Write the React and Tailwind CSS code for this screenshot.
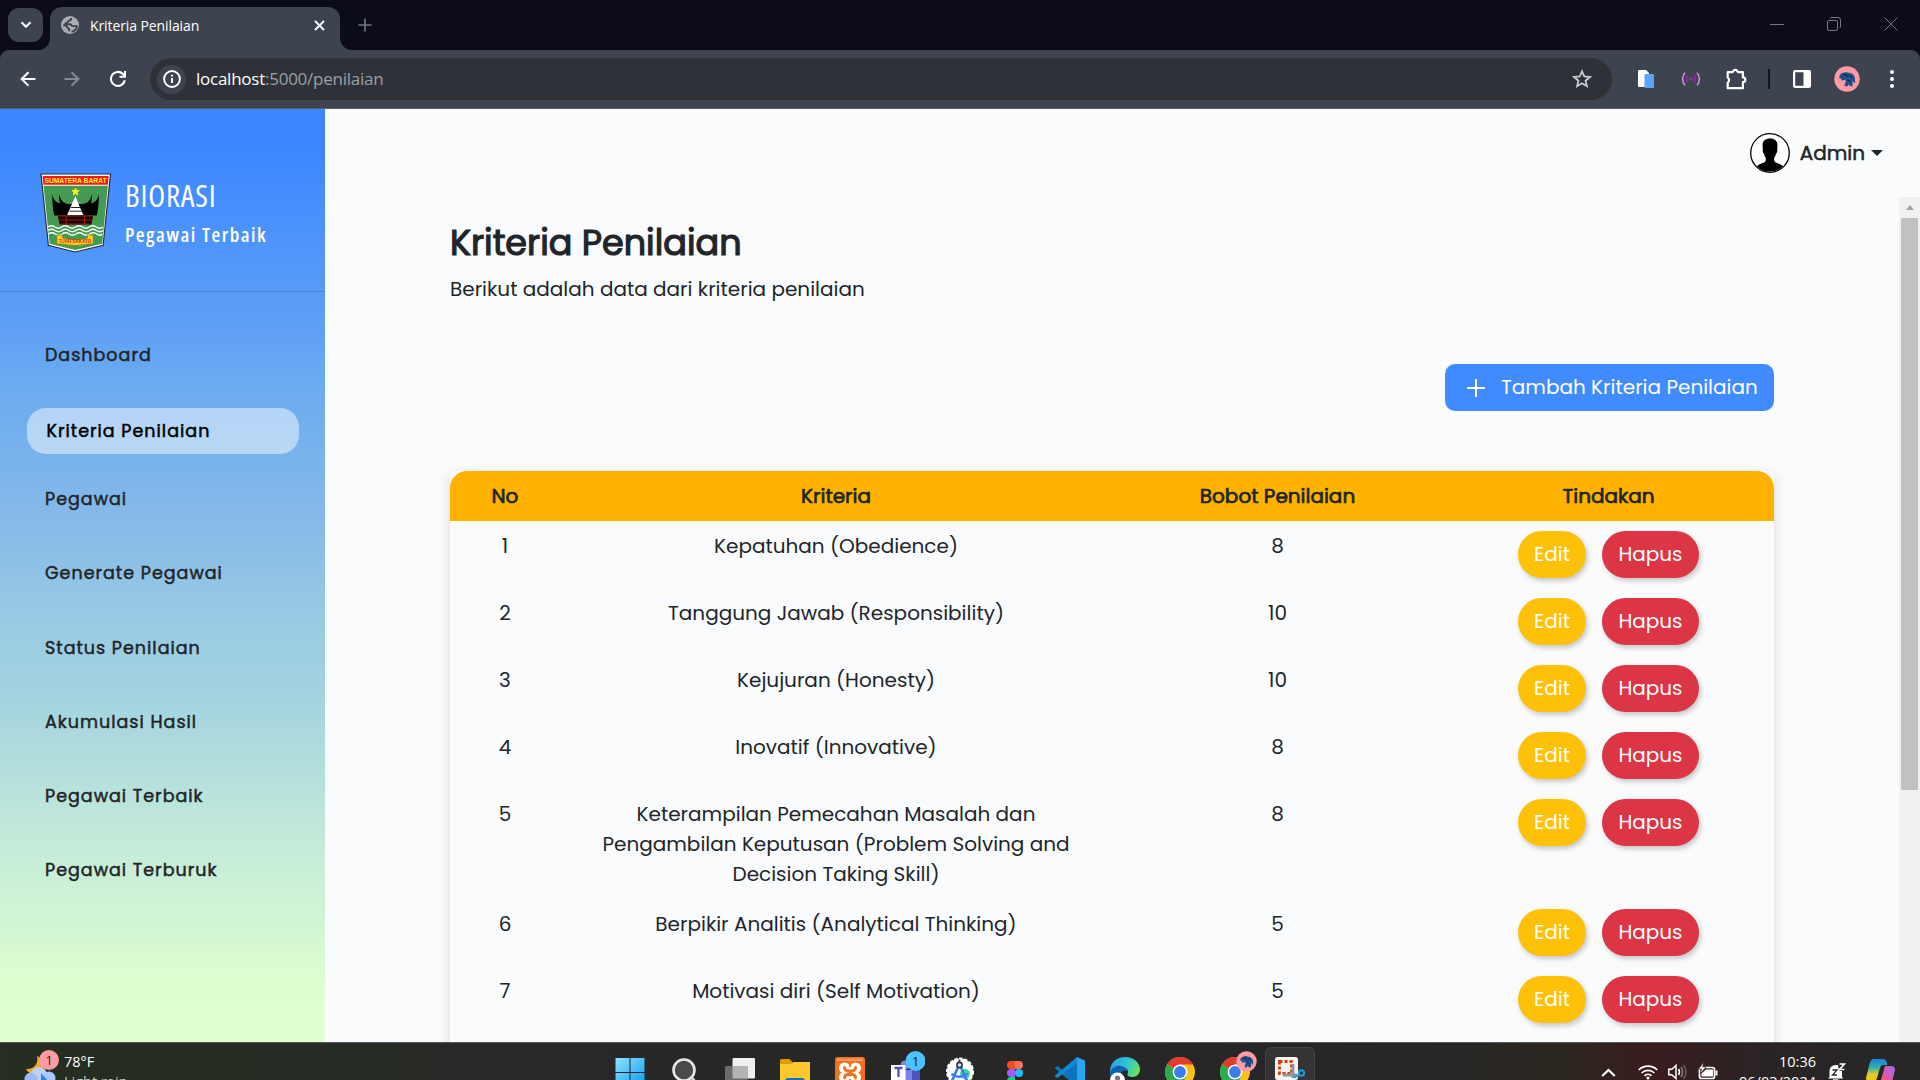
import React from "react";

const MENU = [
  "Pegawai",
  "Generate Pegawai",
  "Status Penilaian",
  "Akumulasi Hasil",
  "Pegawai Terbaik",
  "Pegawai Terburuk",
];

const ROWS = [
  { no: 1, name: "Kepatuhan (Obedience)", weight: 8 },
  { no: 2, name: "Tanggung Jawab (Responsibility)", weight: 10 },
  { no: 3, name: "Kejujuran (Honesty)", weight: 10 },
  { no: 4, name: "Inovatif (Innovative)", weight: 8 },
  { no: 5, name: "Keterampilan Pemecahan Masalah dan Pengambilan Keputusan (Problem Solving and Decision Taking Skill)", weight: 8 },
  { no: 6, name: "Berpikir Analitis (Analytical Thinking)", weight: 5 },
  { no: 7, name: "Motivasi diri (Self Motivation)", weight: 5 },
];

function Elephant({ className }) {
  return (
    <svg viewBox="0 0 26 26" className={className}>
      <circle cx="13" cy="13" r="12.7" fill="#ff9ca3" />
      <path d="M5.500 12c-.5-2 .3-4 2.500-4.700 2-1.300 5-1.500 7-.5 3.300.3 5.800 2.500 6 5.700l.2 4.500-1.500-.2-.5-1.800-.7.500.2 4.700h-3l-.4-1.400-1.300.2-.1 1.200h-3.300l.3-3.200c1-.5 1.200-1.500.6-2.500-.8-.8-2.200-.5-2.800.2-1.300-.2-1.700-1.200-1.500-2.500-.7.500-1.500.4-1.700-.2z" fill="#1f5288" />
      <path d="M9 9c2-.9 4 .1 4.300 2M15 9.500c1.500.3 2.500 1.200 3 2.500M13.500 14l3 1.500" fill="none" stroke="#0c2445" strokeWidth="1.200" />
    </svg>
  );
}

function TabStrip() {
  return (
    <div className="flex h-[50px] bg-[#0c0c18]">
      <div className="ml-2 mt-2 flex h-[34px] w-[35px] items-center justify-center rounded-[11px] bg-[#3d444f]">
        <svg width="12" height="8" viewBox="0 0 12 8"><path d="M1.500 1.300 6 5.800l4.500-4.500" fill="none" stroke="#fff" strokeWidth="2.200" /></svg>
      </div>
      <svg width="12" height="12" className="-ml-[5px] self-end" viewBox="0 0 12 12"><path d="M12 0v12H0A12 12 0 0 0 12 0Z" fill="#3d444f" /></svg>
      <div className="mt-[7px] flex h-[43px] w-[290px] items-center rounded-t-[12px] bg-[#3d444f] pb-[7px] pl-[11px] pr-[15px]">
        <svg width="18" height="18" viewBox="0 0 18 18">
          <circle cx="9" cy="9" r="9" fill="#a9adb3" />
          <path d="M10.300 2c0 2-.4 2.600-2.300 2.700-1.300.1-.8 1.900-2.300 1.900-1 0-1.400.9-1.400 1.600h4.600c1.600 0 1.400 1.700 2.700 1.900h4.300c-.4 3-2.600 5.200-5.300 5.700M2.200 9.300c1.600.1 2.600.1 3.500 1 .9.800.4 1.900 1.700 2.200.9.200.9 1.300.9 2.800" fill="none" stroke="#3d444f" strokeWidth="1.900" />
        </svg>
        <span className="ml-[11px] mt-[2px] flex-1 whitespace-nowrap font-['Open_Sans','Noto_Sans',sans-serif] text-[14px] tracking-[-0.100px] text-white">Kriteria Penilaian</span>
        <svg width="11" height="11" viewBox="0 0 11 11"><path d="m1 1 9 9M10 1l-9 9" stroke="#fff" strokeWidth="1.900" /></svg>
      </div>
      <svg width="12" height="12" className="self-end" viewBox="0 0 12 12"><path d="M0 0v12h12A12 12 0 0 1 0 0Z" fill="#3d444f" /></svg>
      <svg width="14" height="14" className="ml-[6px] mt-[18px]" viewBox="0 0 14 14"><path d="M7 .5v13M.5 7h13" stroke="#70747c" strokeWidth="1.700" /></svg>
      <div className="ml-auto flex gap-[43px] pr-[22px] pt-[17px] text-[#777881]">
        <svg width="14" height="14" viewBox="0 0 14 14"><path d="M0 7.500h14" stroke="currentColor" /></svg>
        <svg width="14" height="14" viewBox="0 0 14 14" fill="none" stroke="currentColor"><rect x=".5" y="3.500" width="10" height="10" rx="1.500" /><path d="M3 1.500Q3.500.5 5 .5h6q2.500 0 2.500 2.500v6q0 1.500-1 2" /></svg>
        <svg width="14" height="14" viewBox="0 0 14 14"><path d="m.5.5 13 13M13.500.5l-13 13" stroke="currentColor" /></svg>
      </div>
    </div>
  );
}

function Toolbar() {
  return (
    <div className="bg-[#0c0c18]">
      <div className="flex h-[59px] items-center rounded-t-[9px] border-b border-[#5d6069] bg-[#3d444f]">
        <svg width="16" height="16" className="ml-5" viewBox="0 0 16 16"><path d="M15.500 8H2M8.500 1.200 1.600 8l6.900 6.800" fill="none" stroke="#fff" strokeWidth="2" /></svg>
        <svg width="16" height="16" className="ml-7" viewBox="0 0 16 16"><path d="M.5 8H14M7.500 1.200 14.400 8l-6.900 6.800" fill="none" stroke="#868b93" strokeWidth="2" /></svg>
        <svg width="18" height="18" className="ml-[29px] mr-[21px]" viewBox="0 0 18 18"><path d="M15.800 10.200A7 7 0 1 1 13.900 4l2 2" fill="none" stroke="#fff" strokeWidth="2.100" /><path d="M16 1v5.800h-5.500" fill="none" stroke="#fff" strokeWidth="2" /></svg>
        <div className="ml-[2px] flex h-[42px] w-[1462px] items-center rounded-full bg-[#2e3238] pl-[7px] pr-5">
          <div className="flex size-[29px] items-center justify-center rounded-full bg-[#3d444f]">
            <svg width="18" height="18" viewBox="0 0 18 18"><circle cx="9" cy="9" r="7.900" fill="none" stroke="#fff" strokeWidth="2" /><path d="M9 8v5M9 4.700v1.800" stroke="#fff" strokeWidth="1.900" /></svg>
          </div>
          <div className="ml-[10px] flex-1 whitespace-nowrap font-['Open_Sans','Noto_Sans',sans-serif] text-[17px] tracking-[-0.250px] text-[#9c9fa3]"><span className="text-white">localhost</span>:5000/penilaian</div>
          <svg width="20" height="20" viewBox="0 0 20 20"><path d="m10 2.300 2.300 5.200 5.600.5-4.300 3.700 1.300 5.500L10 14.300l-4.900 2.900 1.300-5.500L2.100 8l5.600-.5z" fill="none" stroke="#c8cacc" strokeWidth="1.800" /></svg>
        </div>
        <svg width="18" height="20" className="ml-[25px]" viewBox="0 0 18 20"><path d="M2 1h7l3 3v14H2a1 1 0 0 1-1-1V2a1 1 0 0 1 1-1z" fill="#fff" /><rect x="7.500" y="5" width="9.500" height="14" rx="1.200" fill="#5ba4fb" /></svg>
        <svg width="20" height="16" className="ml-[26px]" viewBox="0 0 20 16" fill="none" stroke="#e08af0" strokeWidth="1.500"><circle cx="10" cy="8" r="1.800" fill="#9c27b0" stroke="none" /><path d="M6.800 4.800a5 5 0 0 0 0 6.400M13.200 4.800a5 5 0 0 1 0 6.400" stroke="#9c27b0" /><path d="M4 1.700a9.500 9.500 0 0 0 0 12.600M16 1.700a9.500 9.500 0 0 1 0 12.600" /></svg>
        <svg width="22" height="22" className="ml-[25px]" viewBox="0 0 22 22"><path d="M1.700 4.200h4.500a1 1 0 0 0 .9-.7 2.300 2.300 0 0 1 4.400 0 1 1 0 0 0 .9.7h4.500v5.200a2.400 2.400 0 0 1 0 4.800v6H1.700v-5.600a2.900 2.900 0 0 0 0-5z" fill="none" stroke="#fff" strokeWidth="2.200" strokeLinejoin="round" /></svg>
        <div className="ml-[20px] h-5 w-[2px] bg-[#12141d]" />
        <svg width="18" height="18" className="ml-[23px]" viewBox="0 0 18 18"><rect x="1.100" y="1.100" width="15.800" height="15.800" rx="1" fill="none" stroke="#fff" strokeWidth="2.200" /><path d="M10.500 1H17v16h-6.500z" fill="#fff" /></svg>
        <Elephant className="ml-[23px] size-[26px]" />
        <svg width="6" height="20" className="ml-[29px]" viewBox="0 0 6 20" fill="#fff"><circle cx="3" cy="3" r="2" /><circle cx="3" cy="10" r="2" /><circle cx="3" cy="17" r="2" /></svg>
      </div>
    </div>
  );
}

function Crest() {
  return (
    <svg width="72" height="80" viewBox="0 0 73 80" preserveAspectRatio="none">
      <path d="M1 1h70.500L64 72.300 35.500 79 8.500 72.300z" fill="#fff" stroke="#2b2b3a" strokeWidth="1.200" />
      <path d="M3.600 12.800h65.200L63 70.700 35.500 77 9.800 70.700z" fill="#459a53" />
      <path d="M2.600 3h67l-.8 8.800H3.500z" fill="#ee1c1c" />
      <text x="36" y="10.200" textAnchor="middle" textLength="63" lengthAdjust="spacingAndGlyphs" fontFamily="Liberation Sans, sans-serif" fontWeight="700" fontSize="7.600" fill="#ffee1c">SUMATERA BARAT</text>
      <path d="m36 15 .9 2.600h2.800l-2.200 1.700.8 2.700-2.300-1.600-2.300 1.600.8-2.700-2.200-1.700h2.800z" fill="#ffee1c" stroke="#ffee1c" />
      <path d="M12.500 21c1 6 4 8.500 8 9.500-1-2.500-1.300-5.500-1.200-9.500 1.500 6 4 9.500 10 10h13.500c6-.5 8.500-4 10-10 .1 4-.2 7-1.200 9.500 4-1 7-3.500 8-9.500.2 8-.5 15-2.100 21.500H14.500C13 36 12.300 29 12.500 21z" fill="#000" />
      <path d="M36 22.500c.7 4 2.800 6 3.500 9.500l4.500 10H27.500l4.500-10c.9-3.500 3-5.500 4-9.500z" fill="#fff" />
      <path d="M31.500 34.500h9M30 38.200h12.500" stroke="#222" strokeWidth="1" />
      <path d="M18 42.500h36l-2 9H20z" fill="#1a0000" />
      <path d="M18 43h36M19 47h33M21 51h29M26.500 43v8M45 43v8" stroke="#a01818" strokeWidth="1.100" />
      <path d="M8 54q3.500-2.500 7 0t7 0 7 0 7 0 7 0 7 0 7 0 7 0M8.300 57.500q3.500-2.500 7 0t7 0 7 0 7 0 7 0 7 0 7 0 6.500 0M8.500 61q3.500-2.500 7 0t7 0 7 0 7 0 7 0 7 0 7 0 5.500 0" fill="none" stroke="#fff" strokeWidth="1.300" />
      <path d="M17 62h6v3q13 3.500 25 0v-3h6v9h-4q-14 3-29 0h-4z" fill="#f3d51b" stroke="#7c6a10" strokeWidth=".6" />
      <text x="35.500" y="70.500" textAnchor="middle" textLength="33" lengthAdjust="spacingAndGlyphs" fontFamily="Liberation Sans, sans-serif" fontWeight="700" fontSize="5.500" fill="#e02020">TUAH SAKATO</text>
    </svg>
  );
}

function Sidebar() {
  return (
    <aside className="w-[325px] shrink-0 bg-[linear-gradient(to_bottom,#3a86ff_0%,#3d88ff_5%,#5e9ff6_23%,#6aaaf1_29%,#7ab4ec_38%,#86b9e8_44%,#99cbe3_55%,#a2d2e0_62%,#b6e0dc_72%,#c5ebd9_79%,#d1f5d4_87%,#ddffcf_94%,#dfffcf_100%)] text-[#212529]">
      <div className="flex h-[183px] border-b border-[#4a7dc9] pl-10 pt-[64px]">
        <Crest />
        <div className="ml-[13px] whitespace-nowrap font-['Open_Sans','Noto_Sans',sans-serif] text-white [font-stretch:75%]">
          <div className="mt-[3px] text-[31px] font-medium leading-[38px] tracking-[0.800px]">BIORASI</div>
          <div className="mt-1 text-[20px] font-semibold leading-[34px] tracking-[1.500px]">Pegawai Terbaik</div>
        </div>
      </div>
      <nav className="pt-[50px] text-[17.500px] leading-[27px] tracking-[1px] [-webkit-text-stroke:0.500px_currentColor]">
        <div className="pl-[45px]">Dashboard</div>
        <div className="mb-[32px] ml-[27px] mt-[39px] h-[46px] w-[272px] rounded-[19px] bg-[#f9fbfd]/50 pl-[19.500px] leading-[46px] text-black">Kriteria Penilaian</div>
        <div className="flex flex-col gap-[47.250px]">
          {MENU.map((label) => <div key={label} className="pl-[45px]">{label}</div>)}
        </div>
      </nav>
    </aside>
  );
}

function Header() {
  return (
    <div className="flex h-[88px] items-center justify-end pr-[37px]">
      <svg width="40" height="40" viewBox="0 0 40 40">
        <circle cx="20" cy="20" r="19.300" fill="#fff" stroke="#000" strokeWidth="1.300" />
        <path d="M20 5.500c4.800 0 7.800 2.500 7.400 7.500 0 1.800-.2 3-.2 4 .3 1.500-.3 3.200-1.200 3.800-.4 1.800-1 3-1.800 4-.2 3 .3 4.200 2.300 5 3 1.200 5.200 1.800 6.700 3.500A19.300 19.300 0 0 1 6.800 33.300c1.500-1.700 3.700-2.300 6.700-3.500 2-.8 2.500-2 2.300-5-.8-1-1.400-2.200-1.800-4-.9-.6-1.500-2.300-1.200-3.800 0-1-.2-2.200-.2-4-.4-5 2.600-7.500 7.400-7.500z" fill="#000" />
      </svg>
      <span className="ml-[10px] text-[20px] leading-[30px] [-webkit-text-stroke:0.500px_currentColor]">Admin</span>
      <div className="ml-[6px] border-x-[6px] border-t-[6px] border-x-transparent border-t-[#212529]" />
    </div>
  );
}

function CriteriaTable() {
  return (
    <div className="mt-[60px] h-[700px] shadow-[0_5px_12px_rgba(0,0,0,0.150)]">
      <div className="grid grid-cols-[110px_552px_331px_331px] rounded-t-[17px] bg-[#ffb300] py-[10px] text-center [-webkit-text-stroke:0.700px_currentColor]">
        <div>No</div>
        <div>Kriteria</div>
        <div>Bobot Penilaian</div>
        <div>Tindakan</div>
      </div>
      {ROWS.map((r) => (
        <div key={r.no} className="grid grid-cols-[110px_552px_331px_331px] py-[10px] text-center">
          <div>{r.no}</div>
          <div className="px-[10px]">{r.name}</div>
          <div>{r.weight}</div>
          <div className="flex h-[47px] justify-center gap-4 text-white">
            <button className="h-[47px] w-[68px] rounded-[25px] bg-[#ffc107] pb-[2px] shadow-[2px_3px_5px_rgba(0,0,0,0.200)]">Edit</button>
            <button className="h-[47px] w-[97px] rounded-[25px] bg-[#dc3545] pb-[2px] shadow-[2px_3px_5px_rgba(0,0,0,0.200)]">Hapus</button>
          </div>
        </div>
      ))}
    </div>
  );
}

function Slot({ children }) {
  return <div className="flex w-[55px] justify-center pt-[14px]">{children}</div>;
}

function ChromeLogo() {
  return (
    <svg width="30" height="30" viewBox="0 0 30 30">
      <circle cx="15" cy="15" r="15" fill="#fbc116" />
      <path d="M15 15 2 7.500A15 15 0 0 1 28 7.500H15z" fill="#e33b2e" />
      <path d="M15 15 2 7.500A15 15 0 0 0 15 30l6.500-11.200z" fill="#2da94f" />
      <circle cx="15" cy="15" r="7.400" fill="#fff" /><circle cx="15" cy="15" r="5.900" fill="#3b7ded" />
    </svg>
  );
}

function Taskbar() {
  return (
    <div className="flex h-[38px] overflow-hidden border-t border-[#55565a] bg-[linear-gradient(to_right,#252e20_0%,#252c22_12%,#282828_28%,#262626_75%,#2c261f_82%,#3a1c1e_86%,#2b2324_91%,#262727_100%)] font-['Open_Sans','Noto_Sans',sans-serif] text-[14.500px] text-white">
      <svg width="36" height="38" className="ml-6" viewBox="0 0 36 38">
        <path d="M13 13c2 8-4 14-11 13 4 8 16 6 17-2 .5-5-2-9-6-11z" fill="#f5a623" />
        <circle cx="15" cy="32" r="8" fill="#bcd3f7" /><circle cx="7" cy="36" r="6.500" fill="#9cbcf2" /><circle cx="25" cy="35" r="6.500" fill="#a8c7fa" />
        <path d="m17 30 7 8h-7z" fill="#2f80ed" />
        <circle cx="25" cy="17" r="10" fill="#ff9ca3" />
        <text x="25" y="22" textAnchor="middle" fontSize="13.500" fill="#222">1</text>
      </svg>
      <div className="ml-[4px] w-[538px] whitespace-nowrap pt-[9px] leading-[20px]"><div>78°F</div><div className="text-[#c8c8c8]">Light rain</div></div>
      <div className="flex">
        <Slot><svg width="30" height="30" viewBox="0 0 30 30"><defs><linearGradient id="win" x1="0" y1="0" x2="1" y2="1"><stop stopColor="#8fe3ff" /><stop offset="1" stopColor="#0a9bf2" /></linearGradient></defs><path d="M.5 1h14v14H.5zM15.500 1h14v14h-14zM.5 16h14v14H.5zM15.500 16h14v14h-14z" fill="url(#win)" /></svg></Slot>
        <Slot><svg width="30" height="30" viewBox="0 0 30 30"><circle cx="14" cy="13" r="10.500" fill="#4a4a4a" stroke="#e8e8e8" strokeWidth="2.600" /><path d="m21.500 20.500 6 7" stroke="#d8d8d8" strokeWidth="3" /></svg></Slot>
        <Slot><svg width="30" height="30" viewBox="0 0 30 30"><rect x="7.500" y="1" width="22.500" height="20.500" rx="1" fill="#efefef" /><rect x="0" y="9" width="22.500" height="20" rx="1" fill="#6b6b6b" /><path d="M7.500 9h15v12.500h-15z" fill="#b4b4b4" /></svg></Slot>
        <Slot><svg width="30" height="30" viewBox="0 0 30 30"><path d="M0 3.500Q0 2 1.500 2h8l3 3v6H0z" fill="#e29a08" /><path d="M0 7h11l2.500-2H30v24H0z" fill="#fdc92f" /><path d="M5 30v-6q0-3 3-3h14q3 0 3 3v6z" fill="#1272b8" /></svg></Slot>
        <Slot><svg width="30" height="30" viewBox="0 0 30 30"><rect width="30" height="32" rx="2.500" fill="#f0701b" /><path d="M2 1.500h26V4H2z" fill="#f79a5f" /><g fill="#fff"><circle cx="9.500" cy="11" r="5.500" /><circle cx="20.500" cy="11" r="5.500" /><circle cx="9.500" cy="20.500" r="5.500" /><circle cx="20.500" cy="20.500" r="5.500" /><path d="M9 8h12v15H9z" /></g><path d="M9.500 10.500q0 3 3 3.500h5q3-.5 3-3.500M9.500 21q0-3 3-3.500h5q3 .5 3 3.500M15 14v4" fill="none" stroke="#f0701b" strokeWidth="2.800" strokeLinecap="round" /><path d="M15 5v5M15 22v5" stroke="#f0701b" strokeWidth="1.800" /></svg></Slot>
        <Slot><svg width="36" height="38" className="-mr-[4px] -mt-[8px] shrink-0" viewBox="-3 -8 36 38"><circle cx="13" cy="8" r="4.500" fill="#7b83eb" /><path d="M9 13h12v17H9z" fill="#7b83eb" /><path d="M20 11h8v12q-3 4-8 2z" fill="#4b53bc" /><rect x="-1" y="8" width="14.500" height="15" fill="#fff" /><path d="M2.500 11h8M6.500 11v9" stroke="#4b53bc" strokeWidth="2.300" /><circle cx="23.500" cy="4" r="10" fill="#4cc2ff" /><text x="23.500" y="9" textAnchor="middle" fontSize="13.500" fill="#16232c">1</text></svg></Slot>
        <Slot><svg width="30" height="30" viewBox="0 0 30 30"><circle cx="15" cy="14.500" r="13" fill="#fff" stroke="#fff" strokeWidth="2" strokeDasharray="3.500 1.500" /><circle cx="20" cy="17" r="5" fill="#3ddc84" /><path d="M14 8 7 24M15 8l7 16M6.500 17q8 6 16-.5" fill="none" stroke="#3f7df0" strokeWidth="2.800" /><circle cx="14.500" cy="8" r="2.600" fill="#dfe8f5" stroke="#22324c" strokeWidth="1.600" /><path d="M14.500 2.500v3" stroke="#22324c" strokeWidth="1.600" /></svg></Slot>
        <Slot><svg width="16" height="24" className="mt-1" viewBox="0 0 16 24"><path d="M8 0v8H4a4 4 0 0 1 0-8z" fill="#f24e1e" /><path d="M8 0h4a4 4 0 0 1 0 8H8z" fill="#ff7262" /><path d="M8 8v8H4a4 4 0 0 1 0-8z" fill="#a259ff" /><circle cx="12" cy="12" r="4" fill="#1abcfe" /><path d="M4 16h4v4a4 4 0 1 1-4-4z" fill="#0acf83" /></svg></Slot>
        <Slot><svg width="30" height="30" viewBox="0 0 30 30"><path d="M22 0 8 13 2.500 9 0 10.500v1L22 30z" fill="#0b74bd" /><path d="M0 19.500 2.500 21 22 5.500V0L0 18.500z" fill="#1489d2" /><path d="M22 0 30 3.500v23L22 30z" fill="#28a5f2" /></svg></Slot>
        <Slot><svg width="30" height="30" viewBox="0 0 30 30"><defs><linearGradient id="edge" x1="0" x2="1" y1=".2" y2=".5"><stop stopColor="#2a9be6" /><stop offset=".55" stopColor="#2fc4d8" /><stop offset="1" stopColor="#6ae05a" /></linearGradient></defs><path d="M0 13C1 5 7 0 15 0c9 0 15 6 15 12.500 0 4.500-3.500 7.500-7.500 7.500-3 0-5.500-1-5-3 1.500-3 0-6.500-5-6.500C7 10.500 2 12 0 16z" fill="url(#edge)" /><path d="M0 15c2-4.500 7-7 11-6 4 .8 6 3 6.500 5-5-2-8 2-7 7l3 9H8C2 27-.5 20 0 15z" fill="#0f62b0" /><circle cx="7.500" cy="23" r="7.500" fill="#fff" /><circle cx="7.500" cy="21" r="2.600" fill="#777" /></svg></Slot>
        <Slot><ChromeLogo /></Slot>
        <Slot><div className="relative"><ChromeLogo /><Elephant className="absolute -top-[6px] left-[16px] size-[21px]" /></div></Slot>
        <div className="ml-[3px] mt-[4px] flex h-[50px] w-[50px] justify-center rounded-[6px] border border-[#444] bg-[#343434] pt-[9px]">
          <svg width="32" height="30" className="-mr-[2px] shrink-0" viewBox="0 0 32 30"><rect x="0" y="0" width="23" height="23" rx="2.500" fill="#f3f3f3" /><rect x="4.500" y="4.500" width="12" height="12" fill="none" stroke="#d83b01" strokeWidth="2.800" strokeDasharray="3 2" /><path d="M18 7v14M8 18h14" stroke="#8d949b" strokeWidth="2.800" /><circle cx="26.500" cy="16" r="2.700" fill="none" stroke="#1e9be8" strokeWidth="1.900" /><path d="m24 18-5 2.500" stroke="#1e9be8" strokeWidth="2" /></svg>
        </div>
      </div>
      <div className="ml-auto flex pr-[24px]">
        <svg width="15" height="10" className="mt-[25px]" viewBox="0 0 15 10"><path d="m1.200 8 6.300-6 6.300 6" fill="none" stroke="#fff" strokeWidth="2.200" /></svg>
        <svg width="20" height="16" className="ml-[22px] mt-[21px]" viewBox="0 0 20 16" fill="none" stroke="#fff" strokeWidth="1.700"><path d="M.7 6a13 13 0 0 1 18.600 0M3.600 9a9 9 0 0 1 12.800 0M6.500 11.900a5 5 0 0 1 7 0" /><circle cx="10" cy="14" r="1.600" fill="#fff" stroke="none" /></svg>
        <svg width="20" height="16" className="ml-[10px] mt-[21px]" viewBox="0 0 20 16" fill="none" stroke="#fff" strokeWidth="1.500"><path d="M.8 5.300h3L8 1.500v13l-4.200-3.800h-3z" /><path d="M10.500 5q2 3 0 6" /><path d="M13 3q3.200 5 0 10" stroke="#8a7c7c" /><path d="M15.700 1q4.500 7 0 14" stroke="#6a5c5c" /></svg>
        <svg width="20" height="18" className="ml-[10px] mt-[19px]" viewBox="0 0 20 18"><rect x="1.500" y="5.500" width="15" height="11" rx="2" fill="none" stroke="#fff" strokeWidth="1.700" /><path d="M8 7.500h7v7H3.500v-3z" fill="#fff" /><path d="M17.500 8.500h2v5h-2z" fill="#fff" /><path d="M5.500.5.5 7h3l-1.500 5 6-7H4.800z" fill="#fff" stroke="#2b2324" strokeWidth=".7" /></svg>
        <div className="w-[98px] whitespace-nowrap pt-[9px] text-right leading-[20px]"><div>10:36</div><div>06/03/2024</div></div>
        <svg width="19" height="18" className="ml-[11px] mt-[20px]" viewBox="0 0 19 18"><path d="M2.500 14V7.500A6 6 0 0 1 8.500 2H11l1 5.500 3 .5v6l1.200 1.500H1z" fill="#fff" /><path d="M5.500 7h4.500l-4.500 5h4.500" fill="none" stroke="#262626" strokeWidth="1.300" /><path d="M12.500 1h5l-5 5.500h5" fill="none" stroke="#fff" strokeWidth="1.600" /><path d="M6 16.300h5.500V18H6z" fill="#fff" /></svg>
        <svg width="30" height="30" className="ml-[20px] mt-[16px]" viewBox="0 0 30 30"><defs><linearGradient id="cpa" x1="0" y1="0" x2="0" y2="1"><stop stopColor="#1d7fe0" /><stop offset=".4" stopColor="#2db5a8" /><stop offset=".7" stopColor="#e8c92a" /></linearGradient><linearGradient id="cpb" x1="1" y1="0" x2="0" y2="1"><stop stopColor="#9d6ef0" /><stop offset=".5" stopColor="#e8559a" /><stop offset="1" stopColor="#ffa13a" /></linearGradient></defs><path d="M8 0h9c3 0 3.500 2.500 4.500 6h-4c-2 0-3 1-3.500 3l-3 10c-.5 2-1.500 3-4 3H2.500c-2.500 0-3-2-2-5l3-12C4.500 1.500 5.500 0 8 0z" fill="url(#cpa)" /><path d="M20 7h5c3 0 4.500 2 3.800 5l-3 12c-.8 3-2 5-5 5h-9c-2 0-3-2-4-6h4c2 0 3-1 3.500-3l2.500-9c.5-2 1-4 2.200-4z" fill="url(#cpb)" /></svg>
      </div>
    </div>
  );
}

export default function App() {
  return (
    <div className="flex h-[1080px] w-[1920px] flex-col overflow-hidden bg-[#f9fbfd] font-['Poppins','Inter',sans-serif] text-[20px] leading-[30px] text-[#212529]">
      <TabStrip />
      <Toolbar />
      <div className="flex min-h-0 flex-1">
        <Sidebar />
        <div className="flex min-w-0 flex-1 flex-col">
          <Header />
          <div className="flex min-h-0 flex-1 overflow-hidden">
            <main className="w-[1574px] shrink-0 pl-[125px] pr-[125px] pt-[25px]">
              <h1 className="text-[35px] leading-[42px] [-webkit-text-stroke:1.200px_currentColor]">Kriteria Penilaian</h1>
              <p className="mt-[10px]">Berikut adalah data dari kriteria penilaian</p>
              <div className="mt-[60px] flex justify-end">
                <button className="flex h-[47px] w-[329px] items-center rounded-[10px] bg-[#3f8bff] text-white">
                  <svg width="18" height="18" className="ml-[22px] mr-[16px]" viewBox="0 0 18 18"><path d="M9 0v18M0 9h18" stroke="#fff" strokeWidth="2" /></svg>
                  <span className="pb-[2px]">Tambah Kriteria Penilaian</span>
                </button>
              </div>
              <CriteriaTable />
            </main>
            <div className="flex w-[21px] flex-col items-center bg-[#f1f1f1]">
              <div className="flex h-[21px] shrink-0 items-center justify-center"><div className="border-x-[4px] border-b-[5px] border-x-transparent border-b-[#a3a3a3]" /></div>
              <div className="h-[572px] w-[17px] bg-[#c1c1c1]" />
            </div>
          </div>
        </div>
      </div>
      <Taskbar />
    </div>
  );
}
